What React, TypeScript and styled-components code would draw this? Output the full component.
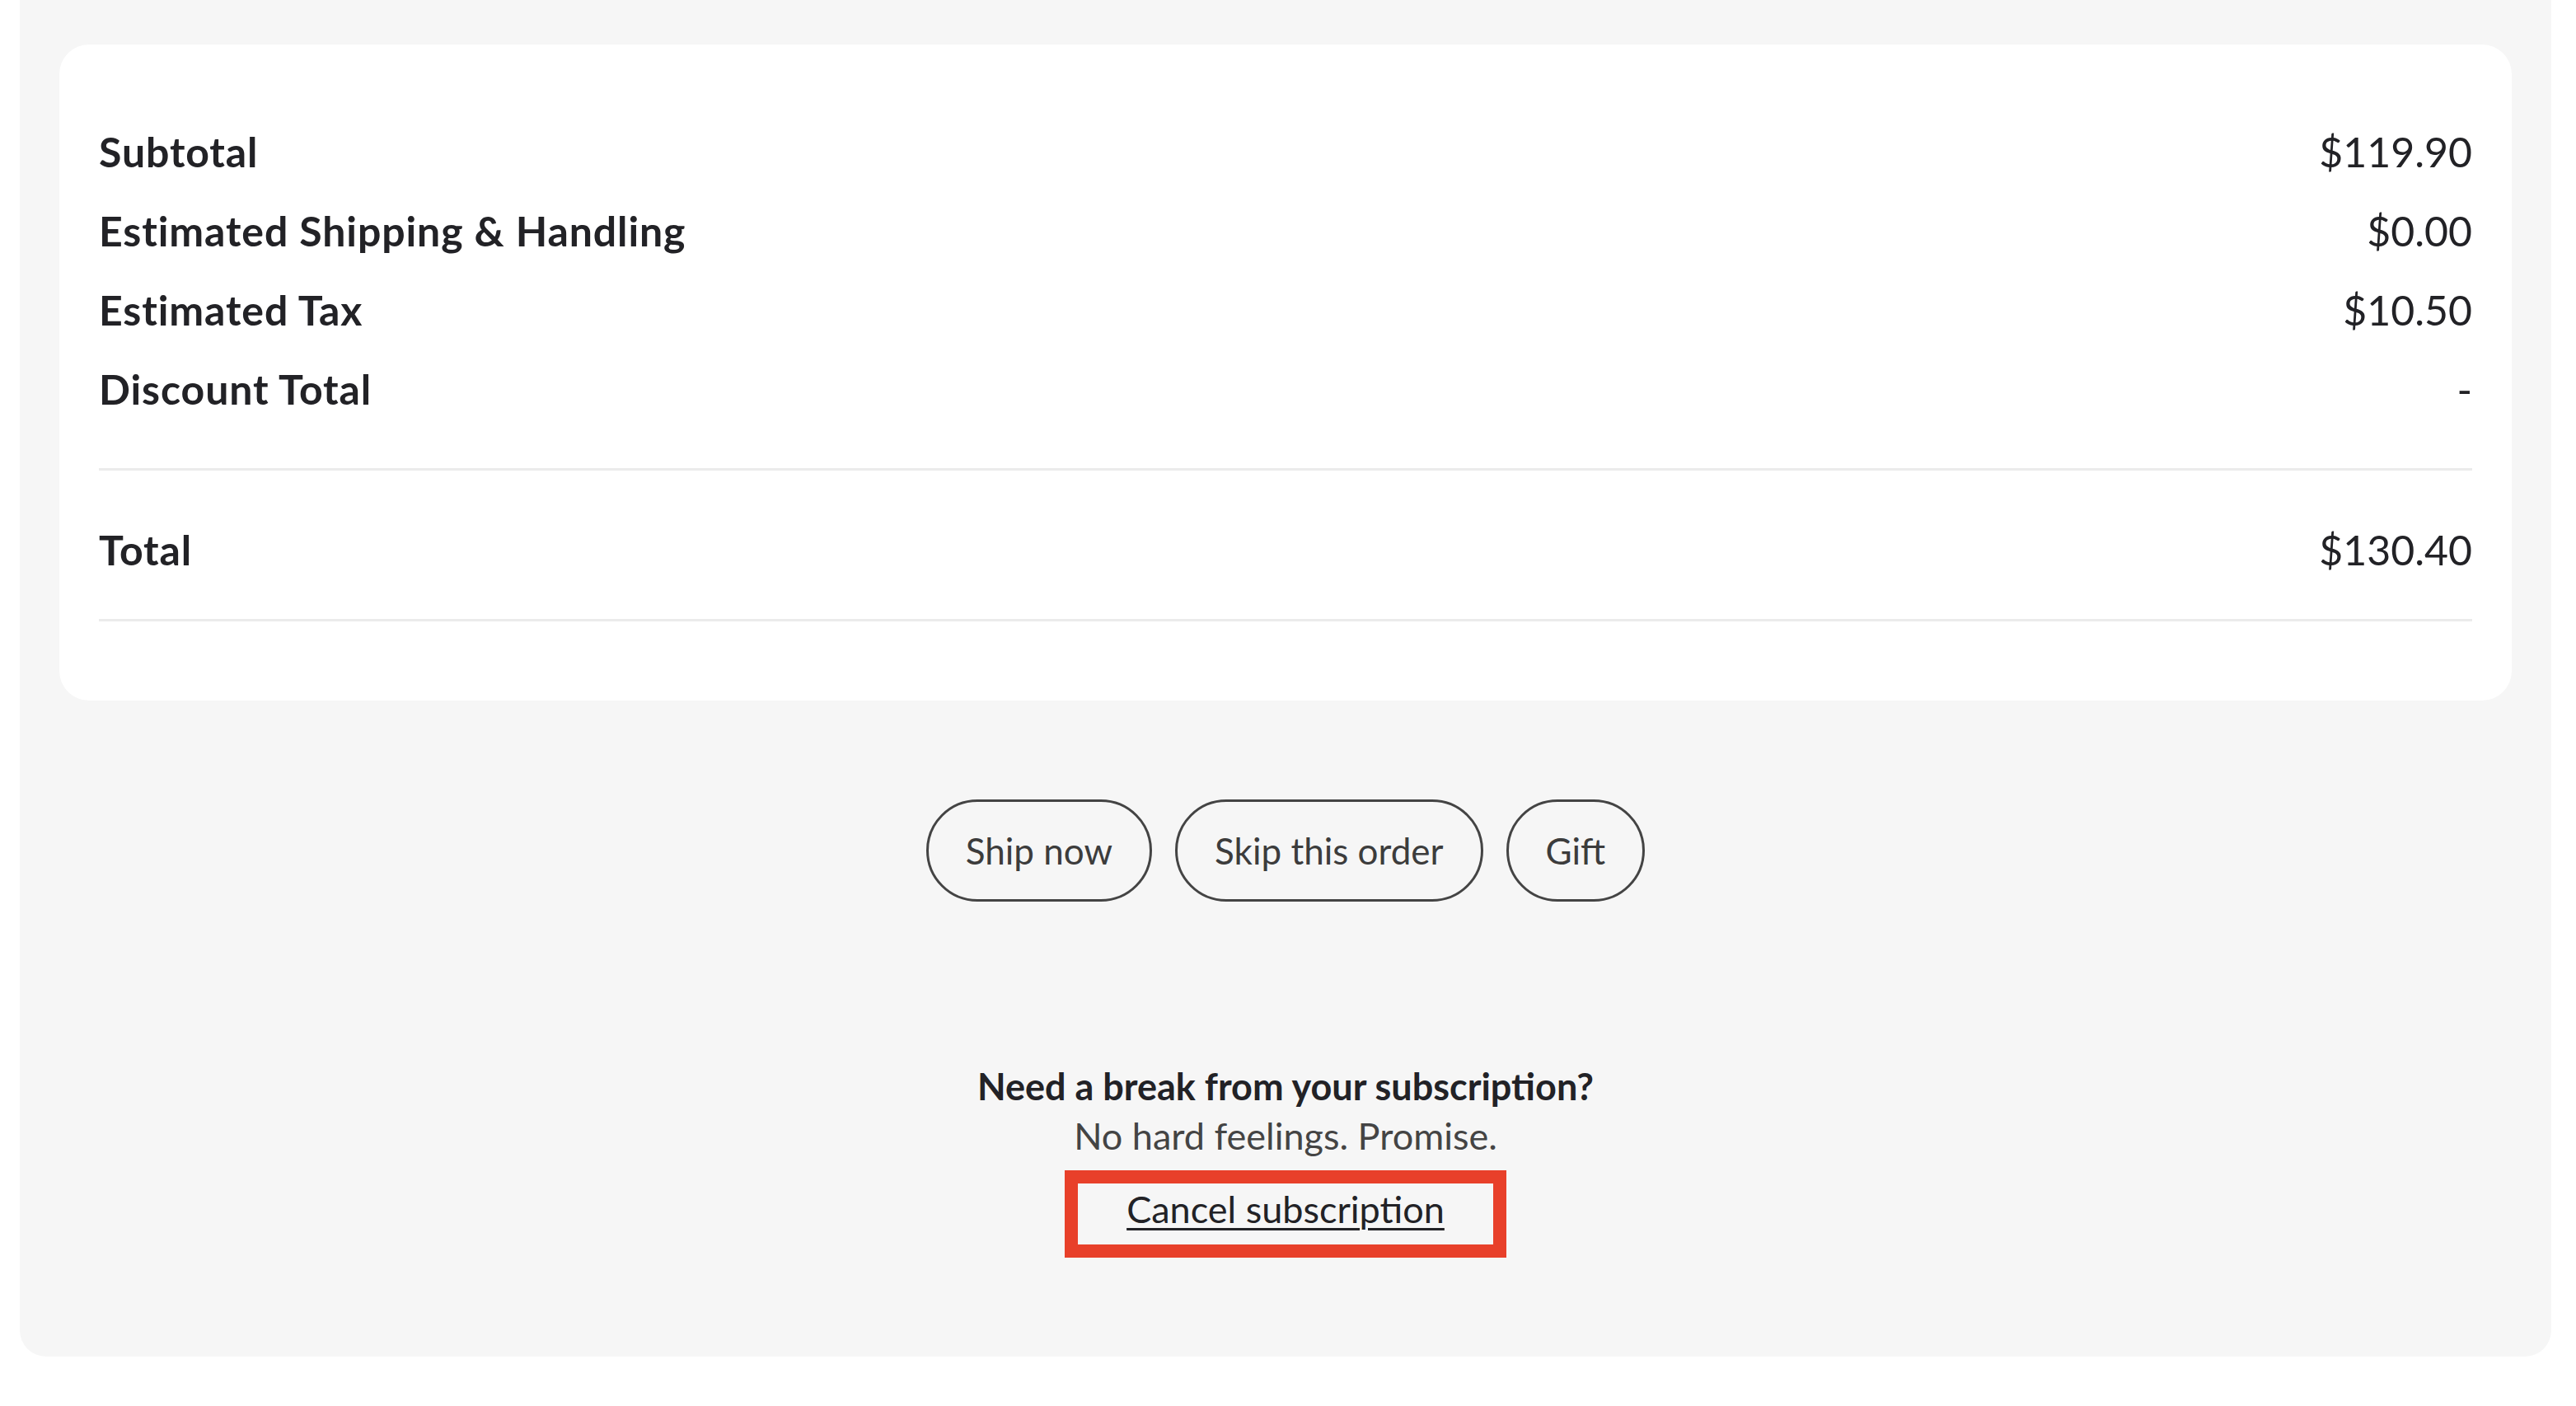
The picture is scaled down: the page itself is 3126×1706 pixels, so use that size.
import React from 'react';
import styled, { createGlobalStyle } from 'styled-components';

const GlobalStyle = createGlobalStyle`
  html, body {
    margin: 0;
    padding: 0;
    background: #ffffff;
  }
  body {
    font-family: Lato, 'Liberation Sans', Arial, sans-serif;
    color: #222226;
  }
`;

const Page = styled.div`
  padding: 0 30px 54px 24px;
`;

const Panel = styled.div`
  background: #f6f6f6;
  border-radius: 0 0 32px 32px;
  padding: 54px 48px 120px;
  display: flex;
  flex-direction: column;
  align-items: stretch;
`;

const SummaryCard = styled.div`
  background: #ffffff;
  border-radius: 36px;
  padding: 82px 48px 96px;
`;

const Row = styled.div`
  display: flex;
  justify-content: space-between;
  align-items: center;
  height: 96px;
  font-size: 50px;
`;

const Label = styled.span`
  font-weight: 700;
  letter-spacing: 0.9px;
`;

const Value = styled.span`
  font-weight: 400;
`;

const Divider = styled.div<{ top: number; bottom: number }>`
  height: 3px;
  background: #ebebeb;
  margin-top: ${({ top }) => top}px;
  margin-bottom: ${({ bottom }) => bottom}px;
`;

const Actions = styled.div`
  display: flex;
  justify-content: center;
  gap: 28px;
  margin-top: 120px;
`;

const PillButton = styled.button`
  height: 124px;
  padding: 0 45px;
  border: 3px solid #444444;
  border-radius: 62px;
  background: transparent;
  font-family: Lato, 'Liberation Sans', Arial, sans-serif;
  font-size: 44px;
  color: #3c3c3c;
  cursor: pointer;
`;

const BreakSection = styled.div`
  margin-top: 194px;
  display: flex;
  flex-direction: column;
  align-items: center;
  text-align: center;
`;

const BreakTitle = styled.p`
  margin: 0;
  font-size: 45px;
  line-height: 60px;
  font-weight: 700;
`;

const BreakText = styled.p`
  margin: 0;
  font-size: 45px;
  line-height: 60px;
  color: #444444;
`;

const CancelLink = styled.a`
  margin-top: 12px;
  display: inline-block;
  width: 536px;
  box-sizing: border-box;
  padding: 4px 0 16px;
  border: 16px solid #e8402a;
  font-size: 45px;
  line-height: 54px;
  color: #222226;
  text-decoration: underline;
  text-underline-offset: 6px;
  text-decoration-thickness: 3px;
  cursor: pointer;
`;

const lines = [
  { label: 'Subtotal', value: '$119.90' },
  { label: 'Estimated Shipping & Handling', value: '$0.00' },
  { label: 'Estimated Tax', value: '$10.50' },
  { label: 'Discount Total', value: '-' },
];

const App = () => {
  return (
    <>
      <GlobalStyle />
      <Page>
        <Panel>
          <SummaryCard>
            {lines.map((item) => (
              <Row key={item.label}>
                <Label>{item.label}</Label>
                <Value>{item.value}</Value>
              </Row>
            ))}
            <Divider top={48} bottom={48} />
            <Row>
              <Label>Total</Label>
              <Value>$130.40</Value>
            </Row>
            <Divider top={36} bottom={0} />
          </SummaryCard>
          <Actions>
            <PillButton>Ship now</PillButton>
            <PillButton>Skip this order</PillButton>
            <PillButton>Gift</PillButton>
          </Actions>
          <BreakSection>
            <BreakTitle>Need a break from your subscription?</BreakTitle>
            <BreakText>No hard feelings. Promise.</BreakText>
            <CancelLink>Cancel subscription</CancelLink>
          </BreakSection>
        </Panel>
      </Page>
    </>
  );
};

export default App;
